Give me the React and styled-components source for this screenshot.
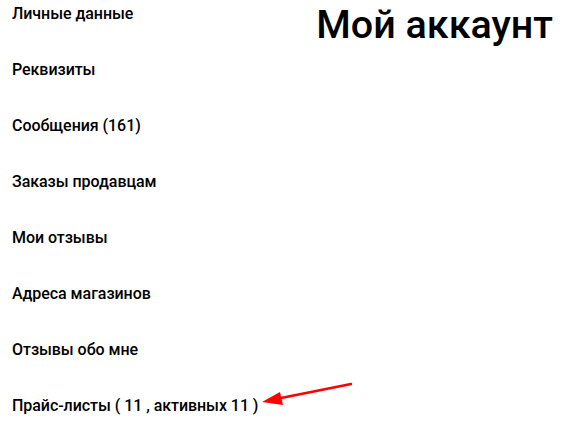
import React from "react";
import styled, { createGlobalStyle } from "styled-components";

const Global = createGlobalStyle`
  html, body { margin: 0; padding: 0; background: #fff; }
  body { font-family: Roboto, "Noto Sans", sans-serif; color: #000; }
`;

const Page = styled.div`
  position: relative;
  width: 568px;
  height: 428px;
  overflow: hidden;
  display: flex;
  justify-content: space-between;
  align-items: flex-start;
`;

const Menu = styled.ul`
  list-style: none;
  margin: 0;
  padding: 4px 0 0 12px;
  display: flex;
  flex-direction: column;
`;

const Item = styled.li`
  height: 56px;
  font-size: 16px;
  line-height: 20px;
  font-weight: 500;
  letter-spacing: -0.05px;
`;

const Title = styled.h1`
  margin: 2px 15px 0 0;
  font-size: 39.5px;
  line-height: 46px;
  font-weight: 500;
`;

const Arrow = styled.svg`
  position: absolute;
  left: 258px;
  top: 379px;
`;

const items = [
  "Личные данные",
  "Реквизиты",
  "Сообщения (161)",
  "Заказы продавцам",
  "Мои отзывы",
  "Адреса магазинов",
  "Отзывы обо мне",
  "Прайс-листы ( 11 , активных 11 )",
];

export default function App() {
  return (
    <>
      <Global />
      <Page>
        <Menu>
          {items.map((t) => (
            <Item key={t}>{t}</Item>
          ))}
        </Menu>
        <Title>Мой аккаунт</Title>
        <Arrow width="100" height="30" viewBox="0 0 100 30">
          <line x1="93" y1="5" x2="18" y2="20" stroke="#f00" strokeWidth="2.5" strokeLinecap="round" />
          <polygon points="4,23 22,13 25,26" fill="#f00" />
        </Arrow>
      </Page>
    </>
  );
}
